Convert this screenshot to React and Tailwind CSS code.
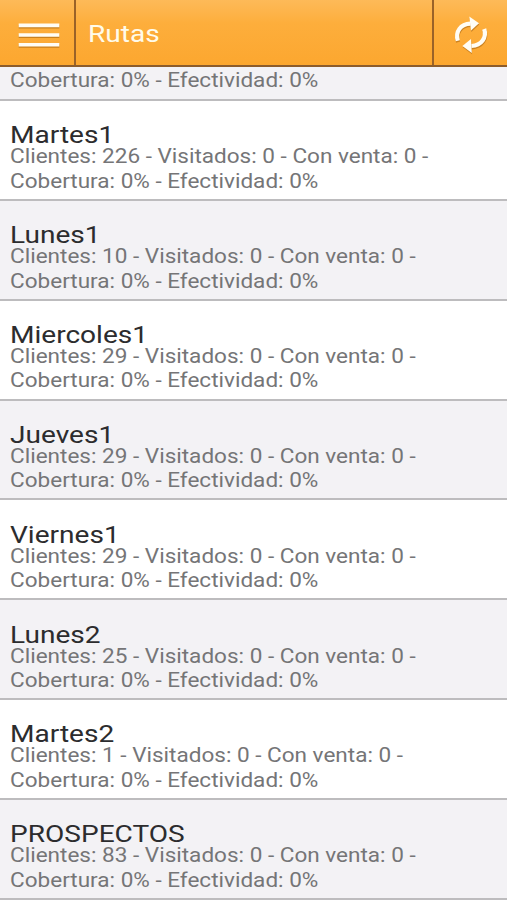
const ROUTES = [
    { name: 'Martes1', clients: 226 },
    { name: 'Lunes1', clients: 10 },
    { name: 'Miercoles1', clients: 29 },
    { name: 'Jueves1', clients: 29 },
    { name: 'Viernes1', clients: 29 },
    { name: 'Lunes2', clients: 25 },
    { name: 'Martes2', clients: 1 },
    { name: 'PROSPECTOS', clients: 83 },
];

function MenuIcon() {
    return (
        <svg className="h-[30px] w-[44px]" viewBox="0 0 44 30" fill="none">
            <path d="M1.7 5.8h40.6M1.7 15.3h40.6M1.7 25h40.6" stroke="#a8640c" strokeOpacity="0.6" strokeWidth="3.6" />
            <path d="M1.7 4.4h40.6M1.7 14h40.6M1.7 23.7h40.6" stroke="#fffdf5" strokeWidth="3.6" />
        </svg>
    );
}

function RefreshShape({ color }) {
    return (
        <g stroke={color} fill={color}>
            <path d="M4.8 24.8C2.2 15.5 7.4 8 17.5 7.6" fill="none" strokeWidth="4.2" />
            <path d="M16.3 0.4 26 7.3 18 14.6z" stroke="none" />
            <path d="M31.2 13C34 21.5 28.5 29.6 18.5 30" fill="none" strokeWidth="4.2" />
            <path d="M18.8 37 9.4 30 18 23z" stroke="none" />
        </g>
    );
}

function RefreshIcon() {
    return (
        <svg className="h-[40px] w-[37px]" viewBox="0 0 37 40">
            <g transform="translate(0.3 1.3)" opacity="0.5">
                <RefreshShape color="#9a5a0c" />
            </g>
            <RefreshShape color="#fffdf5" />
        </svg>
    );
}

function RouteRow({ route }) {
    return (
        <li className="h-[99.85px] shrink-0 border-b-2 border-[#bdbcbe] bg-white pt-[20.3px] pl-[10px] even:bg-[#f3f2f5]">
            <h2 className="w-[400px] origin-left scale-x-[1.145] text-[24.5px] leading-[28px] text-[#2c2c2e]">
                {route.name}
            </h2>
            <p className="-mt-[5px] w-[420px] origin-left scale-x-[1.127] text-[20px] leading-[24.5px] whitespace-nowrap text-[#757577]">
                Clientes: {route.clients} - Visitados: 0 - Con venta: 0 -
                <br />
                Cobertura: 0% - Efectividad: 0%
            </p>
        </li>
    );
}

export default function App() {
    return (
        <div className="flex h-[900px] w-[507px] flex-col overflow-hidden bg-[#f3f2f5] font-[Roboto,sans-serif]">
            <header className="flex h-[67px] shrink-0 border-b-2 border-[#8c5c2c] bg-linear-to-b from-[#fdba58] via-[#fdae3c] via-35% to-[#fca72f]">
                <button className="flex w-[76px] items-center justify-center border-r-2 border-[#9a6228] pt-[7px] pl-[3px]" aria-label="Menu">
                    <MenuIcon />
                </button>
                <h1 className="flex flex-1 items-center pt-[3px] pl-[12px] text-[24px] text-[#fffbea]">
                    <span className="origin-left scale-x-[1.17]">Rutas</span>
                </h1>
                <button className="flex w-[75px] items-center justify-center border-l-2 border-[#9a6228] pt-[7px] pl-px" aria-label="Actualizar">
                    <RefreshIcon />
                </button>
            </header>

            <main className="min-h-0 flex-1">
                {/* Tail of the route that is scrolled under the header */}
                <div className="h-[34px] border-b-2 border-[#bdbcbe] pt-px pl-[10px]">
                    <p className="w-[420px] origin-left scale-x-[1.127] text-[20px] leading-[24.5px] whitespace-nowrap text-[#757577]">
                        Cobertura: 0% - Efectividad: 0%
                    </p>
                </div>
                <ul className="flex flex-col">
                    {ROUTES.map((route) => (
                        <RouteRow key={route.name} route={route} />
                    ))}
                </ul>
            </main>
        </div>
    );
}
